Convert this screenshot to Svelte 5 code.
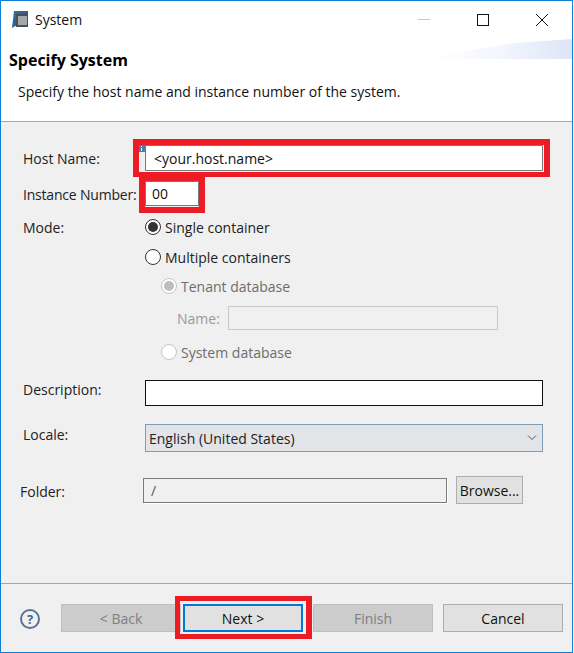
<script>
  let hostName = "<your.host.name>";
  let instance = "00";
  let mode = "single";
</script>

<div class="window">
  <header class="titlebar">
    <svg class="appicon" width="18" height="18" viewBox="0 0 18 18">
      <defs>
        <linearGradient id="side" x1="0" y1="0" x2="1" y2="1">
          <stop offset="0" stop-color="#3f6f9f" />
          <stop offset="1" stop-color="#0f4f94" />
        </linearGradient>
      </defs>
      <path d="M3 0H17V3H6V14L1 17Z" fill="url(#side)" />
      <rect x="5" y="3" width="12" height="13" fill="#4b4f55" />
      <rect x="7" y="5" width="9" height="9" fill="#a3a6aa" />
    </svg>
    <span class="wintitle">System</span>
    <div class="controls">
      <svg width="14" height="14" viewBox="0 0 14 14"><path d="M1 6.5H13" stroke="#c8c8c8" /></svg>
      <svg width="14" height="14" viewBox="0 0 14 14"><rect x="1.5" y="1.5" width="11" height="11" fill="none" stroke="#111" /></svg>
      <svg width="14" height="14" viewBox="0 0 14 14"><path d="M1 1L13 13M13 1L1 13" stroke="#111" /></svg>
    </div>
  </header>

  <section class="banner">
    <div class="swoosh"></div>
    <h1>Specify System</h1>
    <p>Specify the host name and instance number of the system.</p>
  </section>

  <form class="form" on:submit|preventDefault>
    <div class="row">
      <span class="label">Host Name:</span>
      <div class="field grow">
        <svg class="info" width="7" height="7" viewBox="0 0 7 7">
          <rect width="7" height="7" fill="#4a7db5" />
          <path d="M3.5 1V2M3.5 3V6" stroke="#fff" />
        </svg>
        <input class="text host" bind:value={hostName} />
        <div class="hl hl-host"></div>
      </div>
    </div>

    <div class="row instance">
      <span class="label">Instance Number:</span>
      <div class="field short">
        <input class="text" bind:value={instance} />
        <div class="hl hl-inst"></div>
      </div>
    </div>

    <div class="row mode">
      <span class="label">Mode:</span>
      <label class="radio"><input type="radio" bind:group={mode} value="single" /><i></i>Single container</label>
    </div>
    <div class="row multi">
      <span class="label"></span>
      <label class="radio"><input type="radio" bind:group={mode} value="multi" /><i></i>Multiple containers</label>
    </div>
    <div class="row tenant">
      <span class="label"></span>
      <div class="radio off on"><i></i>Tenant database</div>
    </div>
    <div class="row name">
      <span class="label"></span>
      <span class="namelabel">Name:</span>
      <div class="namebox"></div>
    </div>
    <div class="row sysdb">
      <span class="label"></span>
      <div class="radio off"><i></i>System database</div>
    </div>

    <div class="row desc">
      <span class="label up">Description:</span>
      <input class="text black grow" />
    </div>

    <div class="row locale">
      <span class="label up">Locale:</span>
      <div class="select grow">
        <span>English (United States)</span>
        <svg width="10" height="6" viewBox="0 0 10 6"><path d="M1 0.5L5 4.5L9 0.5" fill="none" stroke="#555" /></svg>
      </div>
    </div>

    <div class="row folder">
      <span class="label">Folder:</span>
      <div class="folderbox">/</div>
      <button type="button" class="browse">Browse...</button>
    </div>
  </form>

  <footer class="footer">
    <div class="help">?</div>
    <button type="button" class="btn back" disabled>&lt; Back</button>
    <div class="field nextwrap">
      <button type="button" class="btn next">Next &gt;</button>
      <div class="hl hl-next"></div>
    </div>
    <button type="button" class="btn finish" disabled>Finish</button>
    <button type="button" class="btn cancel">Cancel</button>
  </footer>
</div>

<style>
  :global(body) {
    margin: 0;
    background: #fff;
  }
  .window {
    box-sizing: border-box;
    width: 573px;
    height: 653px;
    border: 1px solid #0f7fd6;
    display: flex;
    flex-direction: column;
    background: #fff;
    font-family: "Open Sans", "Noto Sans", sans-serif;
    font-size: 14px;
    color: #111;
  }
  .titlebar {
    height: 38px;
    display: flex;
    align-items: center;
    padding-left: 10px;
    flex: none;
  }
  .appicon {
    margin-right: 6px;
  }
  .wintitle {
    font-size: 14px;
    margin-top: -2px;
  }
  .controls {
    margin-left: auto;
    display: flex;
    gap: 45px;
    padding-right: 23px;
    margin-top: -1px;
  }
  .banner {
    position: relative;
    height: 83px;
    flex: none;
    box-sizing: border-box;
    border-bottom: 1px solid #a6a6a6;
    padding-left: 8px;
  }
  .swoosh {
    position: absolute;
    right: 0;
    top: 0;
    width: 142px;
    height: 20px;
    background: linear-gradient(90deg, #fff 0%, #f3f6fd 50%, #dde5f7 100%);
    clip-path: polygon(0 100%, 30% 55%, 60% 20%, 100% 0, 100% 100%);
  }
  h1 {
    margin: 0;
    padding-top: 10px;
    font-size: 16px;
    line-height: 22px;
    font-weight: 700;
    color: #000;
    position: relative;
  }
  .banner p {
    margin: 0;
    padding: 11px 0 0 9px;
    line-height: 20px;
  }
  .form {
    flex: 1;
    background: #f0f0f0;
    padding: 23px 0 0 22px;
    border-bottom: 1px solid #a6a6a6;
    box-shadow: 0 1px 0 #fff;
    box-sizing: border-box;
    min-height: 0;
  }
  .row {
    display: flex;
    align-items: center;
    width: 520px;
    color: #222;
  }
  .label {
    width: 122px;
    flex: none;
    white-space: nowrap;
  }
  .label.up {
    margin-top: -8px;
  }
  .instance .label {
    letter-spacing: -0.2px;
    margin-top: 2px;
  }
  .grow {
    flex: 1;
    min-width: 0;
  }
  .field {
    position: relative;
  }
  .short {
    width: 54px;
  }
  .text {
    box-sizing: border-box;
    display: block;
    width: 100%;
    height: 26px;
    border: 1px solid #7a7a7a;
    background: #fff;
    padding: 0 6px;
    font: inherit;
    color: #111;
    outline: none;
    border-radius: 0;
  }
  .host {
    padding-left: 8px;
  }
  .black {
    border-color: #111;
  }
  .instance {
    margin-top: 10px;
  }
  .instance .text {
    height: 25px;
  }
  .info {
    position: absolute;
    left: -7px;
    top: 0;
  }
  .hl {
    position: absolute;
    border: 6px solid #ed1c24;
    pointer-events: none;
  }
  .hl-host {
    inset: -6px -7px -6px -12px;
    border-bottom-width: 5px;
  }
  .hl-inst {
    inset: -4px -6px -7px -6px;
    border-top-width: 4px;
  }
  .hl-next {
    inset: -8px -9px -7px -8px;
    border-width: 5px 6px 5px 5px;
  }
  .radio {
    display: flex;
    align-items: center;
    height: 20px;
    gap: 4px;
  }
  .radio input {
    position: absolute;
    opacity: 0;
    margin: 0;
    width: 0;
    height: 0;
  }
  .radio i {
    box-sizing: border-box;
    width: 16px;
    height: 16px;
    border-radius: 50%;
    border: 1px solid #333;
    background: #fff;
    display: block;
    position: relative;
  }
  .radio input:checked + i::after,
  .radio.on i::after {
    content: "";
    position: absolute;
    inset: 2px;
    border-radius: 50%;
    background: #333;
  }
  .radio.off {
    color: #6d6d6d;
    margin-left: 16px;
  }
  .radio.off i {
    border-color: #c4c4c4;
  }
  .radio.on i::after {
    background: #bdbdbd;
  }
  .mode {
    margin-top: 11px;
  }
  .multi {
    margin-top: 10px;
  }
  .tenant {
    margin-top: 9px;
  }
  .name {
    margin-top: 10px;
  }
  .namelabel {
    margin-left: 32px;
    width: 51px;
    color: #9a9a9a;
  }
  .namebox {
    box-sizing: border-box;
    width: 270px;
    height: 24px;
    border: 1px solid #c8c8c8;
    background: #f0f0f0;
  }
  .sysdb {
    margin-top: 12px;
  }
  .desc {
    margin-top: 18px;
  }
  .locale {
    margin-top: 18px;
  }
  .select {
    box-sizing: border-box;
    height: 28px;
    background: #e2e4e7;
    border: 1px solid #7f9db9;
    display: flex;
    align-items: center;
    justify-content: space-between;
    padding: 0 5px 0 3px;
  }
  .folder {
    margin-top: 24px;
    margin-left: -3px;
    width: 503px;
  }
  .folder .label {
    width: 123px;
    margin-top: 2px;
  }
  .folderbox {
    box-sizing: border-box;
    width: 304px;
    height: 25px;
    border: 1px solid #7a7a7a;
    box-shadow: 1px 1px 0 #fff;
    padding-left: 7px;
    line-height: 23px;
    color: #555;
  }
  .browse {
    box-sizing: border-box;
    margin-left: 9px;
    width: 67px;
    height: 28px;
    padding: 0;
    background: #e1e1e1;
    border: 1px solid #adadad;
    font: inherit;
    color: #111;
  }
  .footer {
    box-sizing: border-box;
    height: 68px;
    flex: none;
    background: #f0f0f0;
    display: flex;
    align-items: flex-start;
    padding: 20px 0 0 60px;
    position: relative;
  }
  .help {
    position: absolute;
    left: 19px;
    top: 25px;
    box-sizing: border-box;
    width: 20px;
    height: 20px;
    border: 2px solid #5a7394;
    border-radius: 50%;
    color: #4a6587;
    font-weight: 700;
    font-size: 13px;
    line-height: 16px;
    text-align: center;
  }
  .btn {
    box-sizing: border-box;
    width: 120px;
    height: 28px;
    padding: 0;
    background: #e1e1e1;
    border: 1px solid #adadad;
    font: inherit;
    color: #111;
  }
  .btn:disabled {
    background: #cccccc;
    border-color: #bfbfbf;
    color: #808080;
  }
  .nextwrap {
    margin-left: 2px;
    height: 28px;
  }
  .next {
    border: 2px solid #0078d7;
  }
  .finish {
    margin-left: 10px;
  }
  .cancel {
    margin-left: 10px;
  }
</style>
